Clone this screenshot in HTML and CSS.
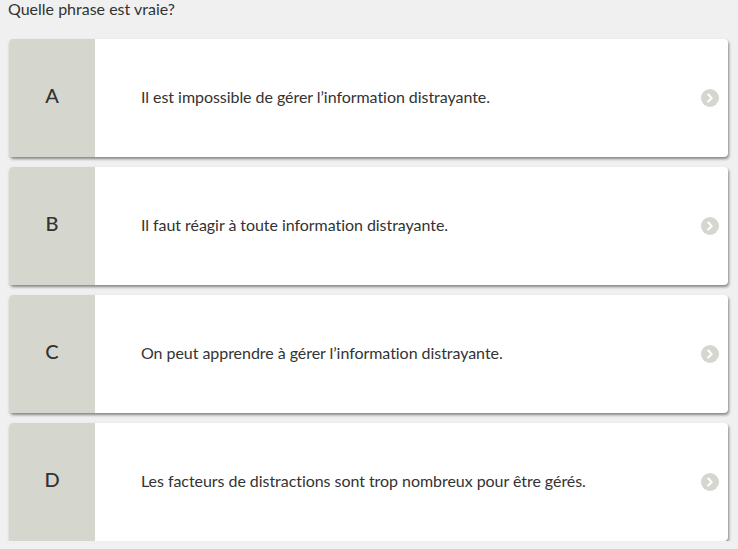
FILE: index.html
```html
<!DOCTYPE html>
<html lang="fr">

<head>
    <meta charset="UTF-8">
    <meta name="viewport" content="width=device-width, initial-scale=1.0">
    <title>Quiz</title>
    <link rel="stylesheet" href="styles.css">
</head>

<body>

    <div class="question">Quelle phrase est vraie?</div>

    <div class="answers">
        <div class="answer">
            <div class="letter">A</div>
            <div class="text">Il est impossible de gérer l’information distrayante.</div>
            <svg class="go" viewBox="0 0 18 18"><circle cx="9" cy="9" r="9" /><path d="M7.3 5.6 L10.6 9 L7.3 12.4" /></svg>
        </div>
        <div class="answer">
            <div class="letter">B</div>
            <div class="text">Il faut réagir à toute information distrayante.</div>
            <svg class="go" viewBox="0 0 18 18"><circle cx="9" cy="9" r="9" /><path d="M7.3 5.6 L10.6 9 L7.3 12.4" /></svg>
        </div>
        <div class="answer">
            <div class="letter">C</div>
            <div class="text">On peut apprendre à gérer l’information distrayante.</div>
            <svg class="go" viewBox="0 0 18 18"><circle cx="9" cy="9" r="9" /><path d="M7.3 5.6 L10.6 9 L7.3 12.4" /></svg>
        </div>
        <div class="answer">
            <div class="letter">D</div>
            <div class="text">Les facteurs de distractions sont trop nombreux pour être gérés.</div>
            <svg class="go" viewBox="0 0 18 18"><circle cx="9" cy="9" r="9" /><path d="M7.3 5.6 L10.6 9 L7.3 12.4" /></svg>
        </div>
    </div>

</body>

</html>
```

FILE: styles.css
```css
body {
    margin: 0;
    font-family: Lato, 'Liberation Sans', sans-serif;
    font-variant-ligatures: none;
    background-color: #f0f0f0;
    color: #333;
}

.question {
    font-size: 16px;
    line-height: 17px;
    padding: 0 8px;
}

.answers {
    display: flex;
    flex-direction: column;
    gap: 10px;
    padding: 22px 10px 0 9px;
}

.answer {
    display: flex;
    align-items: center;
    height: 118px;
    background-color: #fff;
    border-radius: 4px;
    overflow: hidden;
    box-shadow: 1px 2px 3px rgba(0, 0, 0, 0.45);
}

.letter {
    width: 86px;
    height: 100%;
    flex-shrink: 0;
    display: flex;
    align-items: center;
    justify-content: center;
    padding-bottom: 6px;
    box-sizing: border-box;
    background-color: #d5d7ce;
    font-size: 20px;
    font-weight: 500;
    color: #333;
}

.text {
    flex: 1;
    padding: 0 0 3px 46px;
    font-size: 16px;
    letter-spacing: -0.05px;
}

.go {
    width: 18px;
    height: 18px;
    margin-right: 9px;
    flex-shrink: 0;
}

.go circle {
    fill: #d5d7ce;
}

.go path {
    fill: none;
    stroke: #fff;
    stroke-width: 2.2;
    stroke-linecap: round;
    stroke-linejoin: round;
}
```
